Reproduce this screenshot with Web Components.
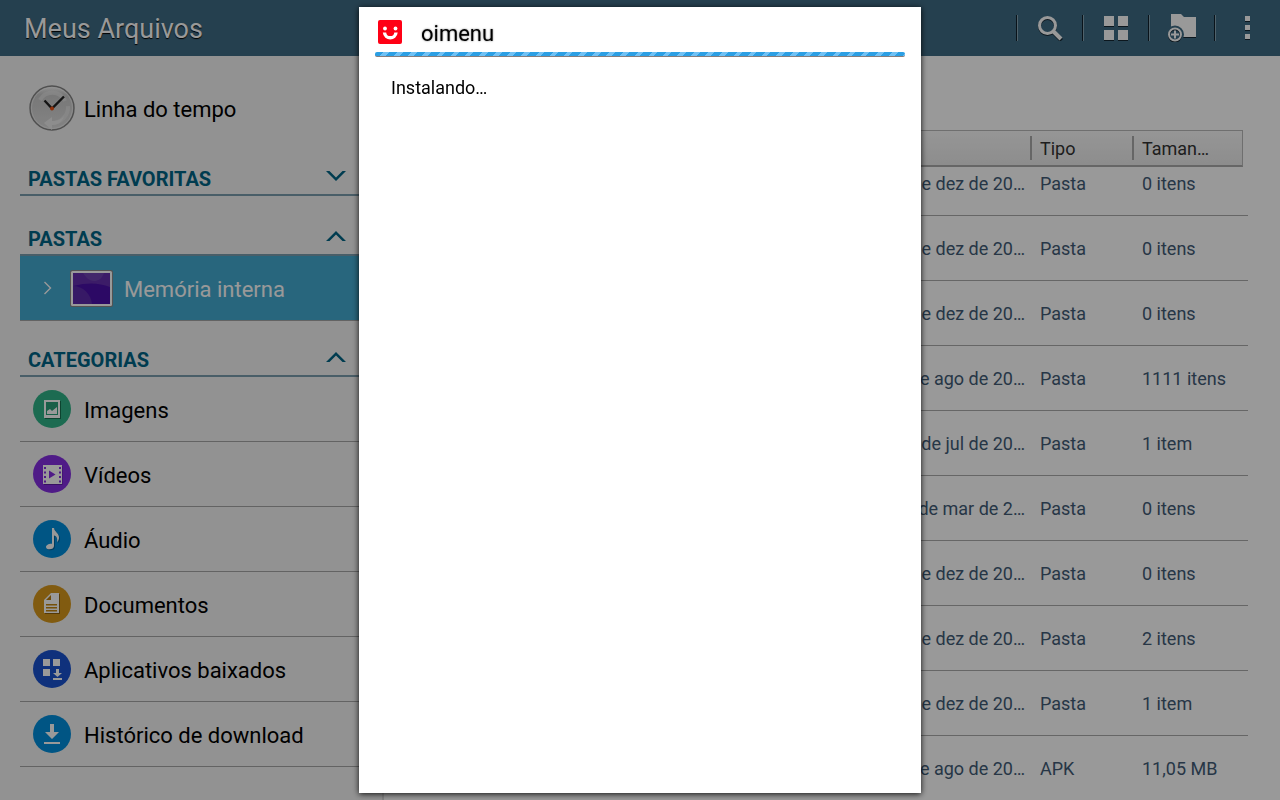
<!DOCTYPE html>
<html lang="pt-BR">
<head>
<meta charset="utf-8">
<title>Meus Arquivos</title>
<style>
    body {
        margin: 0;
        font-family: Roboto, "Liberation Sans", sans-serif;
        overflow: hidden;
    }
</style>
</head>
<body>
<file-manager></file-manager>
<install-dialog name="oimenu">Instalando…</install-dialog>

<script>
const define = (name, html, setup) => {
    const template = document.createElement("template");
    template.innerHTML = html;
    customElements.define(name, class extends HTMLElement {
        constructor() {
            super();
            this.attachShadow({ mode: "open" });
            this.shadowRoot.appendChild(template.content.cloneNode(true));
        }

        $(selector) {
            return this.shadowRoot.querySelector(selector);
        }

        connectedCallback() {
            if (setup) setup(this);
        }
    });
};

const icons = {
    clock: `<svg width="46" height="46" viewBox="0 0 46 46">
        <defs><linearGradient id="g" x2="0" y2="1"><stop stop-color="#f4f4f4"/><stop offset=".2" stop-color="#c8c8c8"/><stop offset="1" stop-color="#dcdcdc"/></linearGradient></defs>
        <circle cx="23" cy="23" r="22" fill="url(#g)" stroke="#858585" stroke-width="1.4"/>
        <circle cx="23" cy="23" r="20.5" fill="none" stroke="#f5f5f5" stroke-opacity=".6"/>
        <path d="M11 15a14 14 0 0 1 25 1M39 21a16 16 0 0 1-16 17" fill="none" stroke="#e6e6e6" stroke-width="4" opacity=".65"/>
        <path d="M15 38l8-6v4c5 0 9-1 12-5-2 6-6 9-12 9v5z" fill="#ececec"/>
        <path d="M15.500 15.500L23 23.500 35 11.500" fill="none" stroke="#222" stroke-width="2.400"/>
        <circle cx="23" cy="23.500" r="2" fill="#f05010"/></svg>`,
    images: `<svg width="38" height="38" viewBox="0 0 38 38"><circle cx="19" cy="19" r="19" fill="#2fb287"/>
        <path d="M12 11h16v18H12z" fill="#17704f"/><path d="M11 10h16v18H11z" fill="#fff"/>
        <path d="M13 12h12v13H13z" fill="#2a9e78"/><path d="M14 24v-3l3-2 2 2 5-4v7z" fill="#fff"/></svg>`,
    videos: `<svg width="38" height="38" viewBox="0 0 38 38"><circle cx="19" cy="19" r="19" fill="#842de1"/>
        <path d="M11 11h18.500v19H11z" fill="#5c1ca3"/><path d="M10 10h19v19H10z" fill="#fff"/>
        <path d="M16 15.500l6.500 4-6.500 4z" fill="#842de1"/>
        <path d="M12 12v16M27 12v16" stroke="#842de1" stroke-width="2" stroke-dasharray="2 2.500"/></svg>`,
    audio: `<svg width="38" height="38" viewBox="0 0 38 38"><circle cx="19" cy="19" r="19" fill="#008edc"/>
        <path d="M19 8h2c.3 3.500 5.500 5.500 5 10-.2 1.700-.8 3-2 4 .8-3.800-.5-6-3-6.500V26c0 2-2 3.300-4.500 3.300-2 0-3.500-.8-3.500-2.300 0-2.200 3-3.600 6-3.300z" fill="#00669f" transform="translate(1 1)"/>
        <path d="M19 8h2c.3 3.500 5.500 5.500 5 10-.2 1.700-.8 3-2 4 .8-3.800-.5-6-3-6.500V26c0 2-2 3.300-4.500 3.300-2 0-3.500-.8-3.500-2.300 0-2.200 3-3.600 6-3.300z" fill="#fff"/></svg>`,
    documents: `<svg width="38" height="38" viewBox="0 0 38 38"><circle cx="19" cy="19" r="19" fill="#d8981c"/>
        <path d="M12 16l7-7h8v20H12z" fill="#8e600a"/><path d="M11 15l7-7h8v20H11z" fill="#fff"/>
        <path d="M13 15l5-5v5z" fill="#b97c0c"/><path d="M13 19h11v1.500H13zM13 22h11v1.500H13zM13 25h11v1.500H13z" fill="#c4860f"/></svg>`,
    apps: `<svg width="38" height="38" viewBox="0 0 38 38"><circle cx="19" cy="19" r="19" fill="#1952cf"/>
        <path d="M10 9h7v7h-7zM20 9h7v7h-7zM10 19h7v7h-7zM23 19h3v4h3l-4.500 4-4.500-4h3zM20 28h9v2h-9z" fill="#fff"/></svg>`,
    download: `<svg width="38" height="38" viewBox="0 0 38 38"><circle cx="19" cy="19" r="19" fill="#008edc"/>
        <path d="M17 9h4v8h5l-7 7-7-7h5zM11 27h16v2H11z" fill="#fff"/></svg>`,
    search: `<svg width="26" height="26" viewBox="0 0 26 26"><g fill="none" stroke-width="3">
        <circle cx="10.500" cy="11.500" r="8" stroke="#152733"/><path d="M16 17l8.500 8.500" stroke="#152733" stroke-width="4"/>
        <circle cx="10.500" cy="10.500" r="8" stroke="#fff"/><path d="M16 16l8 8" stroke="#fff" stroke-width="4"/></g></svg>`,
    grid: `<svg width="26" height="26" viewBox="0 0 26 26"><path d="M1 1h10v11H1zM15 1h10v11H15zM1 15h10v11H1zM15 15h10v11H15z" fill="#152733"/>
        <path d="M1 1h10v10H1zM15 1h10v10H15zM1 15h10v10H1zM15 15h10v10H15z" fill="#fff"/></svg>`,
    folder: `<svg width="28" height="28" viewBox="0 0 28 28"><path d="M3 1h10l3 3h12v20H3z" fill="#152733"/>
        <path d="M3 0h10l3 3h12v20H3z" fill="#fff"/><circle cx="7" cy="20.500" r="9" fill="#3f6b84"/>
        <circle cx="7" cy="21.500" r="6" fill="none" stroke="#152733" stroke-width="2"/>
        <circle cx="7" cy="20.500" r="6" fill="none" stroke="#fff" stroke-width="2"/>
        <path d="M7 16.500v8M3 20.500h8" stroke="#fff" stroke-width="2"/></svg>`,
    more: `<svg width="6" height="26" viewBox="0 0 6 26"><path d="M0 2h5v5H0zM0 11h5v5H0zM0 20h5v5H0z" fill="#152733"/>
        <path d="M0 1h5v5H0zM0 10h5v5H0zM0 19h5v5H0z" fill="#fff"/></svg>`,
    down: `<svg width="20" height="10" viewBox="0 0 20 10"><path d="M0 0h3.500L10 6.500 16.500 0H20L10 10z" fill="#006585"/></svg>`,
    up: `<svg width="20" height="10" viewBox="0 0 20 10"><path d="M0 10h3.500L10 3.500l6.500 6.500H20L10 0z" fill="#006585"/></svg>`,
    memory: `<svg width="70" height="38" viewBox="0 0 70 38">
        <path d="M1.500 13l6 6-6 6" fill="none" stroke="#fff" stroke-width="1.400"/>
        <rect x="27" y="1" width="43" height="37" rx="2" fill="#8a8a8a"/><rect x="28" y="2" width="41" height="35" rx="1.500" fill="#fff"/>
        <path d="M30 4h37v31H30z" fill="#4a0fa8"/>
        <path d="M30 4h37v14c-11-4-21-5-37-1z" fill="#6430ad"/><path d="M40 4h21c-2 6-6 8-10 8s-8-3-11-8z" fill="#7a50b8" opacity=".6"/>
        <path d="M30 17c10 0 18 8 19 18H30z" fill="#5c2aab"/></svg>`,
    smile: `<svg width="24" height="24" viewBox="0 0 24 24"><rect width="24" height="24" rx="2" fill="#ff0015"/>
        <circle cx="7" cy="8.500" r="1.900" fill="#fff"/><circle cx="17.500" cy="8.500" r="1.900" fill="#fff"/>
        <path d="M6.500 12.500c.5 7 11 7 11.500 0" fill="none" stroke="#fff" stroke-width="3.400"/></svg>`
};

define("app-icon", `<style>
    :host { display: flex; align-items: center; justify-content: center; flex: none; }
    div, svg { display: block; }
</style>
<div></div>`, el => {
    el.$("div").innerHTML = icons[el.getAttribute("name")] || "";
    el.setAttribute("aria-hidden", "true");
});

// Toolbar button with the thin divider that stands before it
define("tool-button", `<style>
    :host { display: flex; align-items: center; }
    .divider { width: 1px; height: 26px; border-left: 1px solid #10212c; background: #86a3b3; }
    button { width: 64px; height: 56px; padding: 0; border: 0; background: none; display: flex; align-items: center; justify-content: center; cursor: pointer; }
</style>
<span class="divider"></span>
<button type="button"><slot></slot></button>`, el => {
    el.$("button").setAttribute("aria-label", el.getAttribute("label"));
});

define("app-bar", `<style>
    :host { display: flex; align-items: center; justify-content: space-between; height: 56px; background: #3f6b84; color: #fff; }
    h1 { margin: 0; padding: 2px 0 0 24px; font-size: 27px; line-height: 54px; font-weight: 400; text-shadow: 0 1px 1px #000; }
    .tools { display: flex; }
</style>
<h1><slot></slot></h1>
<div class="tools">
    <tool-button label="Pesquisar"><app-icon name="search"></app-icon></tool-button>
    <tool-button label="Exibir como"><app-icon name="grid"></app-icon></tool-button>
    <tool-button label="Criar pasta"><app-icon name="folder"></app-icon></tool-button>
    <tool-button label="Mais opções"><app-icon name="more"></app-icon></tool-button>
</div>`);

define("nav-item", `<style>
    :host { display: block; }
    a { display: flex; align-items: center; height: 64px; border-bottom: 1px solid #a5a5a5; color: #000; font-size: 22px; text-decoration: none; }
    app-icon { width: 64px; }
    span { padding-top: 2px; }
    :host([plain]) a { height: 104px; border: 0; }
    :host([selected]) a { background: #43aad0; color: #fff; }
    :host([selected]) app-icon { width: 104px; padding-left: 12px; box-sizing: border-box; }
</style>
<a href="#"><app-icon></app-icon><span><slot></slot></span></a>`, el => {
    const icon = document.createElement("app-icon");
    icon.setAttribute("name", el.getAttribute("icon"));
    el.$("app-icon").replaceWith(icon);
});

define("nav-section", `<style>
    :host { display: block; margin-bottom: 24px; }
    h2 { margin: 0; font-size: 20px; }
    button { display: flex; align-items: center; justify-content: space-between; width: 100%; height: 36px; padding: 4px 36px 0 8px; border: 0; border-bottom: 2px solid #7b9dae; background: none; color: #006585; font: inherit; cursor: pointer; }
    app-icon { padding-bottom: 6px; }
</style>
<h2><button type="button"><span></span><app-icon></app-icon></button></h2>
<slot></slot>`, el => {
    const open = el.hasAttribute("open");
    const icon = document.createElement("app-icon");
    icon.setAttribute("name", open ? "up" : "down");
    el.$("app-icon").replaceWith(icon);
    el.$("span").textContent = el.getAttribute("label");
    el.$("button").setAttribute("aria-expanded", open);
});

define("side-nav", `<style>
    :host { display: block; box-sizing: border-box; padding-left: 20px; background: #f3f3f3; border-right: 2px solid #dcdcdc; }
    .storage { margin-bottom: 20px; }
</style>
<nav>
    <nav-item icon="clock" plain>Linha do tempo</nav-item>
    <nav-section label="PASTAS FAVORITAS"></nav-section>
    <nav-section class="storage" label="PASTAS" open>
        <nav-item icon="memory" selected>Memória interna</nav-item>
    </nav-section>
    <nav-section label="CATEGORIAS" open>
        <nav-item icon="images">Imagens</nav-item>
        <nav-item icon="videos">Vídeos</nav-item>
        <nav-item icon="audio">Áudio</nav-item>
        <nav-item icon="documents">Documentos</nav-item>
        <nav-item icon="apps">Aplicativos baixados</nav-item>
        <nav-item icon="download">Histórico de download</nav-item>
    </nav-section>
</nav>`);

const files = [
    ["de dez de 20…", "Pasta", "0 itens"],
    ["de dez de 20…", "Pasta", "0 itens"],
    ["de dez de 20…", "Pasta", "0 itens"],
    ["de ago de 20…", "Pasta", "1111 itens"],
    ["de jul de 20…", "Pasta", "1 item"],
    ["de mar de 2…", "Pasta", "0 itens"],
    ["de dez de 20…", "Pasta", "0 itens"],
    ["de dez de 20…", "Pasta", "2 itens"],
    ["de dez de 20…", "Pasta", "1 item"],
    ["de ago de 20…", "APK", "11,05 MB"]
];

define("file-table", `<style>
    :host { display: block; }
    table { width: 100%; table-layout: fixed; border-spacing: 0; font-size: 18px; line-height: 24px; }
    .type { width: 102px; }
    .size { width: 111px; }
    .gutter { width: 5px; }
    th { height: 34px; padding: 0; text-align: left; font-weight: 400; color: #333; background: linear-gradient(#fafafa, #ebebeb); border-top: 1px solid #bababa; border-bottom: 2px solid #aaa; }
    th span { display: block; height: 24px; padding-left: 8px; border-left: 2px solid #aaa; line-height: 26px; }
    th:nth-child(3) { border-right: 1px solid #bababa; }
    th:last-child { background: none; border-color: transparent; }
    td { height: 65px; padding: 0 0 19px 10px; box-sizing: border-box; vertical-align: bottom; color: #415b76; border-bottom: 1px solid #aaa; white-space: nowrap; }
    td:first-child { text-align: right; padding-right: 5px; }
    td:last-child { padding: 0; }
    /* the first row is scrolled partly under the heading */
    tr:first-child td { height: 49px; }
</style>
<table>
    <colgroup><col><col class="type"><col class="size"><col class="gutter"></colgroup>
    <thead><tr><th></th><th><span>Tipo</span></th><th><span>Taman…</span></th><th></th></tr></thead>
    <tbody></tbody>
</table>`, el => {
    el.$("tbody").innerHTML = files.map(row =>
        `<tr>${row.map(cell => `<td>${cell}</td>`).join("")}<td></td></tr>`).join("");
});

define("file-manager", `<style>
    :host { display: flex; flex-direction: column; height: 100vh; overflow: hidden; background: #fff; }
    app-bar { flex: none; }
    .content { display: flex; flex: 1; min-height: 0; }
    side-nav { flex: 0 0 30%; }
    main { flex: 1; min-width: 0; padding: 74px 32px 0 20px; }
</style>
<app-bar>Meus Arquivos</app-bar>
<div class="content">
    <side-nav></side-nav>
    <main><file-table></file-table></main>
</div>`);

define("install-dialog", `<style>
    :host { position: fixed; inset: 0; display: flex; justify-content: center; padding: 7px; background: rgba(0, 0, 0, 0.4); }
    section { flex: 0 1 562px; background: #fff; color: #000; box-shadow: 0 1px 6px rgba(0, 0, 0, 0.9); }
    header { display: flex; align-items: center; gap: 19px; height: 45px; padding: 5px 19px 0; box-sizing: border-box; }
    h2 { margin: 0; padding-top: 3px; font-size: 22px; font-weight: 400; text-shadow: 0 0 2px #777; }
    .progress { height: 4px; margin: 0 16px; border-radius: 2px; border-bottom: 1px solid #857d7d; background: repeating-linear-gradient(135deg, #2b9fe4 0 6px, #6fc1f5 6px 10px); }
    p { margin: 0; padding: 18px 32px; font-size: 18px; line-height: 26px; }
</style>
<section role="dialog" aria-labelledby="name">
    <header><app-icon name="smile"></app-icon><h2 id="name"></h2></header>
    <div class="progress" role="progressbar"></div>
    <p><slot></slot></p>
</section>`, el => {
    el.$("h2").textContent = el.getAttribute("name");
});
</script>
</body>
</html>
